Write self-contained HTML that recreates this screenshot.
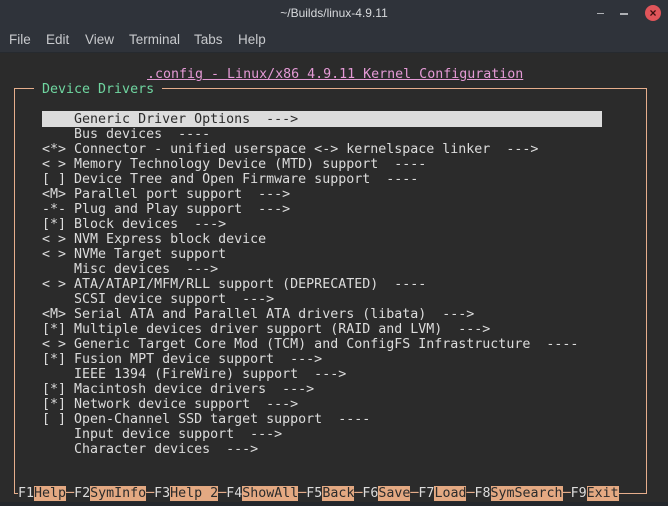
<!DOCTYPE html>
<html><head><meta charset="utf-8"><style>
*{margin:0;padding:0}
body{width:668px;height:506px;background:#2b2b2b;position:relative;overflow:hidden;font-family:"DejaVu Sans Mono","Liberation Mono",monospace}
#tb{position:absolute;left:0;top:0;width:668px;height:27px;background:#2f333a;color:#d8dadd;font:12px "Liberation Sans",sans-serif;text-align:center;line-height:27px}
#mb{position:absolute;left:0;top:27px;width:668px;height:25px;background:#2f333a;color:#c8cacd;font:13.5px "Liberation Sans",sans-serif;border-bottom:1px solid #262a2f}
#mb span{position:absolute;top:5px}
.t{position:absolute;font-size:13.3px;line-height:15px;white-space:pre;color:#dcdcdc}
.box{position:absolute;left:14px;top:88px;width:631px;height:405px;border:1px solid #e6ae8c;border-bottom:none}
.k{background:#e4a982;color:#2b2b2b}
</style></head><body>
<div id="tb">~/Builds/linux-4.9.11</div>
<div style="position:absolute;left:620px;top:13px;width:8px;height:2px;background:#aeb0b4"></div>
<div style="position:absolute;left:597px;top:13px;width:7px;height:1px;background:#aeb0b4"></div>
<div style="position:absolute;left:645px;top:5px;width:16px;height:16px;border-radius:50%;background:#e0555a;color:#3a1010;font:bold 12px 'Liberation Sans',sans-serif;text-align:center;line-height:16px">×</div>
<div id="mb"><span style="left:9px">File</span><span style="left:46px">Edit</span><span style="left:85px">View</span><span style="left:129px">Terminal</span><span style="left:194px">Tabs</span><span style="left:238px">Help</span></div>
<div class="box"></div>
<div class="t" style="left:147px;top:67px;color:#e59ad6;text-decoration:underline">.config - Linux/x86 4.9.11 Kernel Configuration</div>
<div class="t" style="left:34px;top:82px;background:#2b2b2b;color:#6fd6a0"> Device Drivers </div>
<div style="position:absolute;left:42px;top:111px;width:560px;height:16px;background:#dcdcdc"></div>
<div class="t" style="left:42px;top:112px"><span style="color:#2b2b2b">    Generic Driver Options  ---></span>
    Bus devices  ----
&lt;*&gt; Connector - unified userspace &lt;-&gt; kernelspace linker  ---&gt;
&lt; &gt; Memory Technology Device (MTD) support  ----
[ ] Device Tree and Open Firmware support  ----
&lt;M&gt; Parallel port support  ---&gt;
-*- Plug and Play support  ---&gt;
[*] Block devices  ---&gt;
&lt; &gt; NVM Express block device
&lt; &gt; NVMe Target support
    Misc devices  ---&gt;
&lt; &gt; ATA/ATAPI/MFM/RLL support (DEPRECATED)  ----
    SCSI device support  ---&gt;
&lt;M&gt; Serial ATA and Parallel ATA drivers (libata)  ---&gt;
[*] Multiple devices driver support (RAID and LVM)  ---&gt;
&lt; &gt; Generic Target Core Mod (TCM) and ConfigFS Infrastructure  ----
[*] Fusion MPT device support  ---&gt;
    IEEE 1394 (FireWire) support  ---&gt;
[*] Macintosh device drivers  ---&gt;
[*] Network device support  ---&gt;
[ ] Open-Channel SSD target support  ----
    Input device support  ---&gt;
    Character devices  ---&gt;</div>
<div style="position:absolute;left:14px;top:493px;width:632px;height:1px;background:#e6ae8c"></div>
<div class="t" style="left:18px;top:486px;background:#2b2b2b">F1<span class="k">Help</span><span style="color:#e6ae8c">─</span>F2<span class="k">SymInfo</span><span style="color:#e6ae8c">─</span>F3<span class="k">Help 2</span><span style="color:#e6ae8c">─</span>F4<span class="k">ShowAll</span><span style="color:#e6ae8c">─</span>F5<span class="k">Back</span><span style="color:#e6ae8c">─</span>F6<span class="k">Save</span><span style="color:#e6ae8c">─</span>F7<span class="k">Load</span><span style="color:#e6ae8c">─</span>F8<span class="k">SymSearch</span><span style="color:#e6ae8c">─</span>F9<span class="k">Exit</span></div>
<div style="position:absolute;left:0;top:502px;width:668px;height:4px;background:#24272c"></div>
</body></html>
